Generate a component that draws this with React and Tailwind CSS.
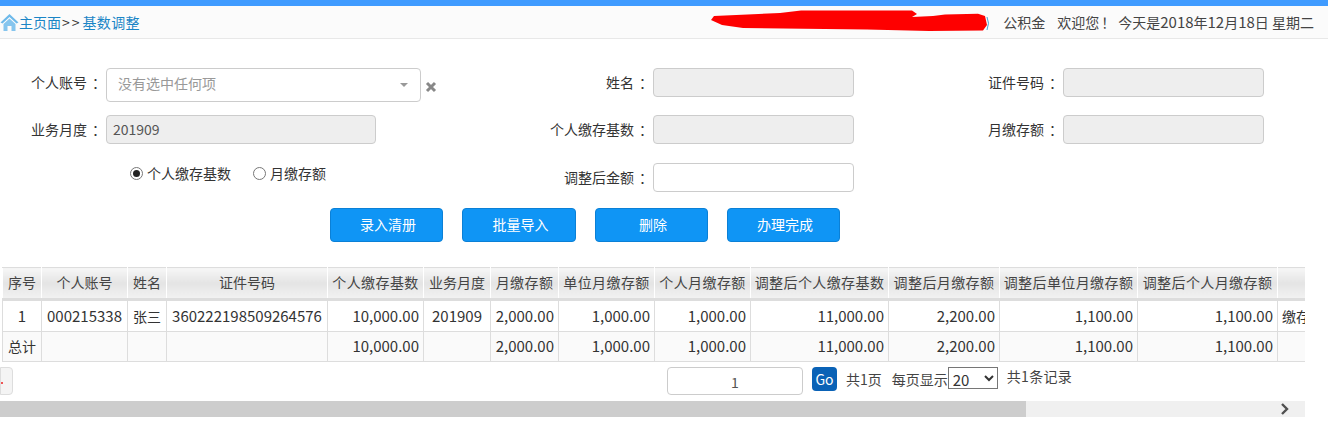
import React from "react";

const font = { fontFamily: '"Noto Sans CJK SC", "Liberation Sans", sans-serif' };

const cols = [39, 86, 39, 161, 96, 67, 68, 96, 96, 138, 111, 138, 140, 60];

const heads = ["序号", "个人账号", "姓名", "证件号码", "个人缴存基数", "业务月度", "月缴存额", "单位月缴存额", "个人月缴存额", "调整后个人缴存基数", "调整后月缴存额", "调整后单位月缴存额", "调整后个人月缴存额", ""];

const rowOne = ["1", "000215338", "张三", "360222198509264576", "10,000.00", "201909", "2,000.00", "1,000.00", "1,000.00", "11,000.00", "2,200.00", "1,100.00", "1,100.00", "缴存"];
const rowTwo = ["总计", "", "", "", "10,000.00", "", "2,000.00", "1,000.00", "1,000.00", "11,000.00", "2,200.00", "1,100.00", "1,100.00", ""];

const centered = [0, 1, 2, 3, 5];
const cjkCells = ["张三", "总计", "缴存"];

const Label = ({ text, width, className = "" }) => (
  <label className={`text-right text-[14px] text-[#333] whitespace-nowrap ${className}`} style={{ width }}>
    {text}
    <span className="ml-[5px]">：</span>
  </label>
);

const Field = ({ label, labelWidth, inputWidth, disabled, value }) => (
  <div className="flex items-center">
    <Label text={label} width={labelWidth} />
    <div
      className={`h-[29px] rounded border border-[#ccc] px-[6px] text-[14px] leading-[27px] text-[#555] ${disabled ? "bg-[#eeeeee]" : "bg-white"}`}
      style={{ width: inputWidth }}
    >
      {value}
    </div>
  </div>
);

const Btn = ({ children, className = "w-[113px]" }) => (
  <button className={`h-[34px] rounded bg-[#0f95f5] border border-[#0b80d6] text-white text-[14px] pl-[3px] pb-[1px] ${className}`}>
    {children}
  </button>
);

const Radio = ({ checked, label }) => (
  <label className="flex items-center gap-[4px] text-[14px] text-[#333]">
    <span className="w-[13px] h-[13px] rounded-full border border-[#777] bg-white flex items-center justify-center">
      {checked && <span className="w-[7px] h-[7px] rounded-full bg-[#222]" />}
    </span>
    {label}
  </label>
);

export default function App() {
  return (
    <div className="w-[1328px] h-[440px] bg-white overflow-hidden text-[#333]" style={font}>
      <div className="h-[6px] bg-[#3f9bff]" />
      <div className="h-[33px] bg-[#fbfbfb] border-b border-[#e8e8e8] flex items-center justify-between pr-[14px]">
        <div className="flex items-center text-[14px]">
          <svg width="19" height="19" viewBox="0 0 19 19" className="mt-[1px]">
            <path d="M9.5 1 L18.5 9.5 L16.5 10.5 L9.5 4 L2.5 10.5 L0.5 9.5 Z" fill="#6db9ea" />
            <path d="M3.5 11 L9.5 5.5 L15.5 11 V18 H11.5 V13 H7.5 V18 H3.5 Z" fill="#86c5ee" />
          </svg>
          <span className="text-[#1a85c6]">主页面</span>
          <span className="text-[#333] ml-[1px] mr-[1px] tracking-[2px]">&gt;&gt;</span>
          <span className="text-[#1a85c6] tracking-[0.3px]">基数调整</span>
        </div>
        <div className="flex items-center text-[14px] text-[#444]">
          <svg width="282" height="24" viewBox="708 8 282 24" className="mr-[12px] mb-[3px]">
            <path d="M710 19 L713 15 L779 12 L800 9.5 L911 9.5 L916 13 L911 16 L932 15 L944 13.5 L977 12.7 L984 15 L986 24 L982 29.5 L928 30 L866 28.5 L742 27 L721 24 Z" fill="#fe0000" />
            <path d="M986 16 Q989 22 986 29" fill="none" stroke="#4aa3d8" strokeWidth="1" />
          </svg>
          <span>公积金</span>
          <span className="ml-[12px]">
            欢迎您<span className="ml-[2px] mr-[3px]">！</span>今天是<span className="text-[15px]">2018</span>年<span className="text-[15px]">12</span>月<span className="text-[15px]">18</span>日 星期二
          </span>
        </div>
      </div>

      <div className="flex items-start mt-[29px]">
        <div className="flex items-center">
          <Label text="个人账号" width={106} className="mb-[6px]" />
          <div className="w-[315px] h-[34px] rounded border border-[#ccc] bg-white flex items-center justify-between pl-[11px] pr-[12px] text-[14px] text-[#999]">
            <span className="mb-[3px]">没有选中任何项</span>
            <span className="w-0 h-0 border-x-[4px] border-x-transparent border-t-[4px] border-t-[#999]" />
          </div>
          <svg width="12" height="12" viewBox="0 0 12 12" className="ml-[4px] mt-[3px]">
            <path d="M2 2 L10 10 M10 2 L2 10" stroke="#888" strokeWidth="3" />
          </svg>
        </div>
        <div className="ml-[6px]">
          <Field label="姓名" labelWidth={210} inputWidth={201} disabled />
        </div>
        <div>
          <Field label="证件号码" labelWidth={209} inputWidth={201} disabled />
        </div>
      </div>

      <div className="flex items-center mt-[13px]">
        <Field label="业务月度" labelWidth={106} inputWidth={270} disabled value="201909" />
        <Field label="个人缴存基数" labelWidth={277} inputWidth={201} disabled />
        <Field label="月缴存额" labelWidth={209} inputWidth={201} disabled />
      </div>

      <div className="flex items-center mt-[19px]">
        <div className="flex items-center gap-[22px] ml-[130px] w-[393px] mt-[-8px]">
          <Radio checked label="个人缴存基数" />
          <Radio label="月缴存额" />
        </div>
        <Field label="调整后金额" labelWidth={130} inputWidth={201} />
      </div>

      <div className="flex mt-[16px] ml-[330px] gap-[19px]">
        <Btn>录入清册</Btn>
        <Btn className="w-[114px]">批量导入</Btn>
        <Btn>删除</Btn>
        <Btn>办理完成</Btn>
      </div>

      <div className="w-[1305px] overflow-hidden mt-[25px]">
        <table className="table-fixed border-collapse ml-[2px] text-[14px] text-[#333]" style={{ width: 1335 }}>
          <colgroup>
            {cols.map((w, i) => (
              <col key={i} style={{ width: w }} />
            ))}
          </colgroup>
          <thead>
            <tr className="h-[32px]">
              {heads.map((h, i) => (
                <th
                  key={i}
                  className="font-normal text-center border-x border-x-white border-t border-t-[#ddd] border-b-[3px] border-b-[#ddd] bg-gradient-to-b from-[#f6f6f6] via-[#e4e4e4] to-[#f2f2f2] whitespace-nowrap p-0 text-[#444]"
                >
                  <span className={`block mb-[2px] ${h.includes("缴") ? "tracking-[0.4px]" : ""}`}>{h}</span>
                </th>
              ))}
            </tr>
          </thead>
          <tbody>
            {[rowOne, rowTwo].map((row, r) => (
              <tr key={r} className={r === 0 ? "h-[32px]" : "h-[30px] bg-[#fafafa]"}>
                {row.map((c, i) => (
                  <td
                    key={i}
                    className={`border border-[#ddd] whitespace-nowrap overflow-hidden p-0 ${cjkCells.includes(c) ? "text-[14px]" : "text-[15px]"} ${
                      i === 13 ? "text-left pl-[4px]" : centered.includes(i) ? "text-center" : "text-right pr-[4px]"
                    }`}
                  >
                    {c}
                  </td>
                ))}
              </tr>
            ))}
          </tbody>
        </table>

        <div className="flex items-start h-[39px] pt-[5px] text-[14px] text-[#444]">
          <div className="w-[13px] h-[28px] rounded-r border border-[#ddd] bg-[#f4f4f4] flex items-center justify-end shrink-0">
            <span className="w-[2px] h-[2px] bg-[#e55] mr-[9px] mt-[4px]" />
          </div>
          <div className="w-[136px] h-[28px] ml-[654px] rounded border border-[#ccc] bg-white text-center leading-[28px] text-[#555]">
            1
          </div>
          <button className="w-[25px] h-[24px] ml-[9px] rounded bg-[#0a62b6] text-white text-[14px] leading-[24px]">
            Go
          </button>
          <span className="ml-[9px] mt-[2px]">共1页</span>
          <span className="ml-[10px] mt-[2px]">每页显示</span>
          <select defaultValue="20" className="w-[50px] h-[22px] border border-[#767676] bg-white text-[15px] text-[#333]">
            <option value="20">20</option>
          </select>
          <span className="ml-[9px] mt-[-1px] tracking-[0.3px]">共1条记录</span>
        </div>

        <div className="h-[16px] bg-[#f0f0f0] flex items-center justify-between">
          <div className="w-[1026px] h-full bg-[#cdcdcd]" />
          <svg width="10" height="12" viewBox="0 0 10 12" className="mr-[15px]">
            <path d="M2 1 L7 6 L2 11" fill="none" stroke="#505050" strokeWidth="2.4" />
          </svg>
        </div>
      </div>
    </div>
  );
}
